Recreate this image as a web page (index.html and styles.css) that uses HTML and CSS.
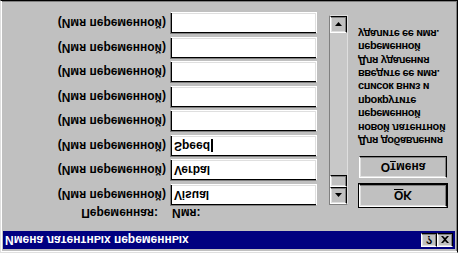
FILE: index.html
```html
<!DOCTYPE html>
<html lang="ru">
<head>
<meta charset="utf-8">
<title>Имена латентных переменных</title>
<link rel="stylesheet" href="styles.css">
</head>
<body>
<div class="window">
  <div class="titlebar">
    <span class="title">Имена латентных переменных</span>
    <div class="tbtns">
      <span class="tbtn">?</span>
      <span class="tbtn"><svg width="8" height="7" viewBox="0 0 8 7"><path d="M0 0h2l2 2 2-2h2L5 3.5 8 7H6L4 5 2 7H0l3-3.5z" fill="#000"/></svg></span>
    </div>
  </div>
  <div class="content">
    <div class="left">
      <div class="header"><span class="hvar">Переменная:</span><span class="hname">Имя:</span></div>
      <div class="listarea">
        <div class="rows">
          <div class="row"><span class="lbl">(Имя переменной)</span><div class="box">Visual</div></div>
          <div class="row"><span class="lbl">(Имя переменной)</span><div class="box">Verbal</div></div>
          <div class="row"><span class="lbl">(Имя переменной)</span><div class="box">Speed<span class="caret"></span></div></div>
          <div class="row"><span class="lbl">(Имя переменной)</span><div class="box"></div></div>
          <div class="row"><span class="lbl">(Имя переменной)</span><div class="box"></div></div>
          <div class="row"><span class="lbl">(Имя переменной)</span><div class="box"></div></div>
          <div class="row"><span class="lbl">(Имя переменной)</span><div class="box"></div></div>
          <div class="row"><span class="lbl">(Имя переменной)</span><div class="box"></div></div>
        </div>
        <div class="scrollbar">
          <div class="sbtn"><svg width="7" height="4" viewBox="0 0 7 4"><path d="M3.5 0L7 4H0z" fill="#000"/></svg></div>
          <div class="thumb"></div>
          <div class="track"></div>
          <div class="sbtn"><svg width="7" height="4" viewBox="0 0 7 4"><path d="M0 0h7L3.5 4z" fill="#000"/></svg></div>
        </div>
      </div>
    </div>
    <div class="right">
      <div class="btn default"><span><u>O</u>K</span></div>
      <div class="btn"><span>О<u>т</u>мена</span></div>
      <p class="help">Для добавления<br>новой латентной<br>переменной<br>прокрутите<br>список вниз и<br>введите ее имя.<br>Для удаления<br>переменной<br>удалите ее имя.</p>
    </div>
  </div>
</div>
</body>
</html>
```
FILE: styles.css
```css
html, body {
  margin: 0;
  padding: 0;
  background: #c0c0c0;
  overflow: hidden;
}

.window {
  box-sizing: border-box;
  width: 458px;
  height: 253px;
  background: #c0c0c0;
  border: 1px solid;
  border-color: #dfdfdf #000 #000 #dfdfdf;
  box-shadow: inset 1px 1px #fff, inset -1px -1px #808080;
  padding: 3px 2px 0 2px;
  font-family: "Liberation Sans", Arial, sans-serif;
  font-size: 12px;
  font-weight: bold;
  color: #000;
  transform: scaleY(-1);
  display: flex;
  flex-direction: column;
}

.titlebar {
  height: 18px;
  background: #000080;
  color: #fff;
  display: flex;
  align-items: center;
  justify-content: space-between;
  padding: 0 2px 0 2px;
}

.title {
  line-height: 18px;
  white-space: nowrap;
}

.tbtns {
  display: flex;
}

.tbtn {
  box-sizing: border-box;
  width: 16px;
  height: 14px;
  background: #c0c0c0;
  color: #000;
  border: 1px solid;
  border-color: #fff #000 #000 #fff;
  box-shadow: inset -1px -1px #808080, inset 1px 1px #dfdfdf;
  display: flex;
  align-items: center;
  justify-content: center;
  font-size: 11px;
  line-height: 1;
}

.content {
  display: flex;
  padding-top: 11px;
}

.left {
  display: flex;
  flex-direction: column;
}

.header {
  height: 14px;
  line-height: 14px;
  display: grid;
  grid-template-columns: 163px auto;
  column-gap: 4px;
}

.hvar {
  text-align: right;
  padding-right: 8px;
}

.hname {
  padding-left: 2px;
}

.listarea {
  display: flex;
  align-items: flex-start;
}

.rows {
  display: flex;
  flex-direction: column;
  gap: 2.5px;
}

.row {
  display: grid;
  grid-template-columns: 163px 147px;
  column-gap: 4px;
  align-items: center;
}

.lbl {
  text-align: right;
  white-space: nowrap;
  line-height: 22px;
}

.box {
  box-sizing: border-box;
  height: 22px;
  background: #fff;
  border: 1px solid;
  border-color: #808080 #fff #fff #808080;
  box-shadow: inset 1px 1px #000, inset -1px -1px #dfdfdf;
  padding-left: 3px;
  line-height: 20px;
  display: flex;
  align-items: center;
}

.caret {
  display: inline-block;
  width: 2px;
  height: 13px;
  background: #000;
  margin-left: 1px;
}

.scrollbar {
  box-sizing: border-box;
  margin-left: 12px;
  margin-top: 1px;
  width: 19px;
  height: 190px;
  display: flex;
  flex-direction: column;
  background: #c8c8c8;
  border-left: 1px solid #808080;
  border-top: 1px solid #808080;
  border-right: 1px solid #dfdfdf;
  border-bottom: 1px solid #dfdfdf;
}

.sbtn, .thumb {
  box-sizing: border-box;
  background: #c0c0c0;
  border: 1px solid;
  border-color: #fff #000 #000 #fff;
  box-shadow: inset -1px -1px #808080, inset 1px 1px #dfdfdf;
}

.sbtn {
  height: 17px;
  display: flex;
  align-items: center;
  justify-content: center;
}

.thumb {
  height: 12px;
}

.track {
  flex: 1;
}

.right {
  margin-left: 11px;
  margin-top: 13px;
  display: flex;
  flex-direction: column;
}

.btn {
  box-sizing: border-box;
  width: 88px;
  height: 22px;
  background: #c0c0c0;
  border: 1px solid;
  border-color: #fff #000 #000 #fff;
  box-shadow: inset -1px -1px #808080, inset 1px 1px #dfdfdf;
  display: flex;
  align-items: center;
  justify-content: center;
  margin-bottom: 6px;
}

.btn.default {
  height: 23px;
  box-shadow: 0 0 0 1px #000, inset -1px -1px #808080, inset 1px 1px #dfdfdf;
}

.btn u {
  text-decoration-thickness: 1px;
  text-underline-offset: 1px;
}

.help {
  margin: 3px 0 0 -1px;
  font-size: 11px;
  letter-spacing: -0.4px;
  line-height: 13.4px;
  white-space: nowrap;
}
```
